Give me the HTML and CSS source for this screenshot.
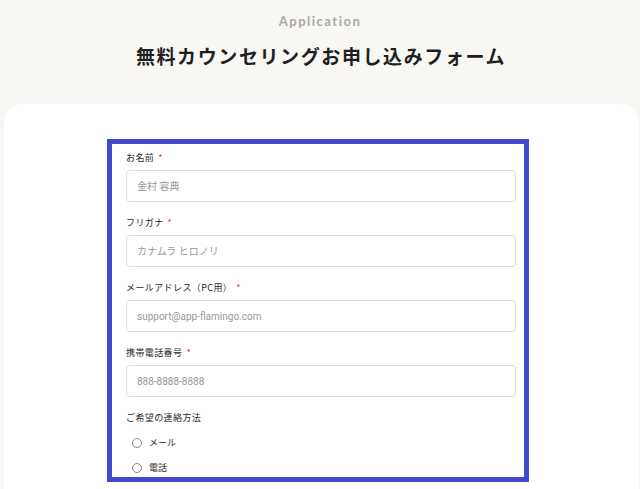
FILE: index.html
```html
<!DOCTYPE html>
<html lang="ja">
<head>
<meta charset="utf-8">
<link rel="stylesheet" href="styles.css">
</head>
<body>
<header class="head">
  <p class="eyebrow">Application</p>
  <h1 class="title">無料カウンセリングお申し込みフォーム</h1>
</header>
<main class="card">
  <form class="form">
    <div class="field">
      <label class="label">お名前<span class="req">*</span></label>
      <input class="input" type="text" placeholder="金村 容典">
    </div>
    <div class="field">
      <label class="label">フリガナ<span class="req">*</span></label>
      <input class="input" type="text" placeholder="カナムラ ヒロノリ">
    </div>
    <div class="field">
      <label class="label">メールアドレス（PC用）<span class="req">*</span></label>
      <input class="input" type="text" placeholder="support@app-flamingo.com">
    </div>
    <div class="field">
      <label class="label">携帯電話番号<span class="req">*</span></label>
      <input class="input" type="text" placeholder="888-8888-8888">
    </div>
    <div class="field field-radio">
      <span class="label">ご希望の連絡方法</span>
      <label class="radio"><span class="dot"></span>メール</label>
      <label class="radio"><span class="dot"></span>電話</label>
    </div>
  </form>
</main>
</body>
</html>
```
FILE: styles.css
```css
* { box-sizing: border-box; }
html, body { margin: 0; padding: 0; }
body {
  background: #f8f7f3;
  font-family: "Noto Sans CJK JP", "Noto Sans", sans-serif;
  color: #222;
  height: 489px;
  overflow: hidden;
}
.head {
  text-align: center;
  padding-top: 12px;
  height: 104px;
}
.eyebrow {
  margin: 0;
  font-family: Lato, "Open Sans", sans-serif;
  font-weight: 700;
  font-size: 13px;
  line-height: 18px;
  letter-spacing: 1.5px;
  color: #a9a9a7;
}
.title {
  margin: 13px 0 0;
  font-size: 19px;
  line-height: 26px;
  font-weight: 700;
  letter-spacing: 1.6px;
  color: #1f1f1f;
  padding-left: 2px;
}
.card {
  background: #fff;
  margin: 0 1px 0 4px;
  border-radius: 18px 18px 0 0;
  padding-top: 35px;
  height: 385px;
}
.form {
  width: 422px;
  margin-left: 103px;
  border: 5px solid #4349cc;
  padding: 6px 8px 0 14px;
  height: 343px;
}
.field { margin-bottom: 13px; }
.label {
  display: block;
  font-size: 9px;
  line-height: 15px;
  letter-spacing: 0.4px;
  color: #2a2a2a;
  margin-bottom: 5px;
}
.req {
  color: #e5333a;
  margin-left: 4px;
}
.input {
  display: block;
  width: 390px;
  height: 32px;
  border: 1px solid #dedede;
  border-radius: 4px;
  padding: 0 10px;
  font-family: Roboto, "Noto Sans CJK JP", sans-serif;
  font-size: 10px;
  color: #333;
  background: #fff;
  outline: none;
}
.input::placeholder { color: #999; }
.field-radio .label { margin-bottom: 5px; }
.radio {
  display: flex;
  align-items: center;
  height: 25px;
  font-size: 9px;
  color: #333;
  padding-left: 6px;
}
.dot {
  width: 10px;
  height: 10px;
  border: 1px solid #8a8a8a;
  border-radius: 50%;
  margin-right: 7px;
}
```
